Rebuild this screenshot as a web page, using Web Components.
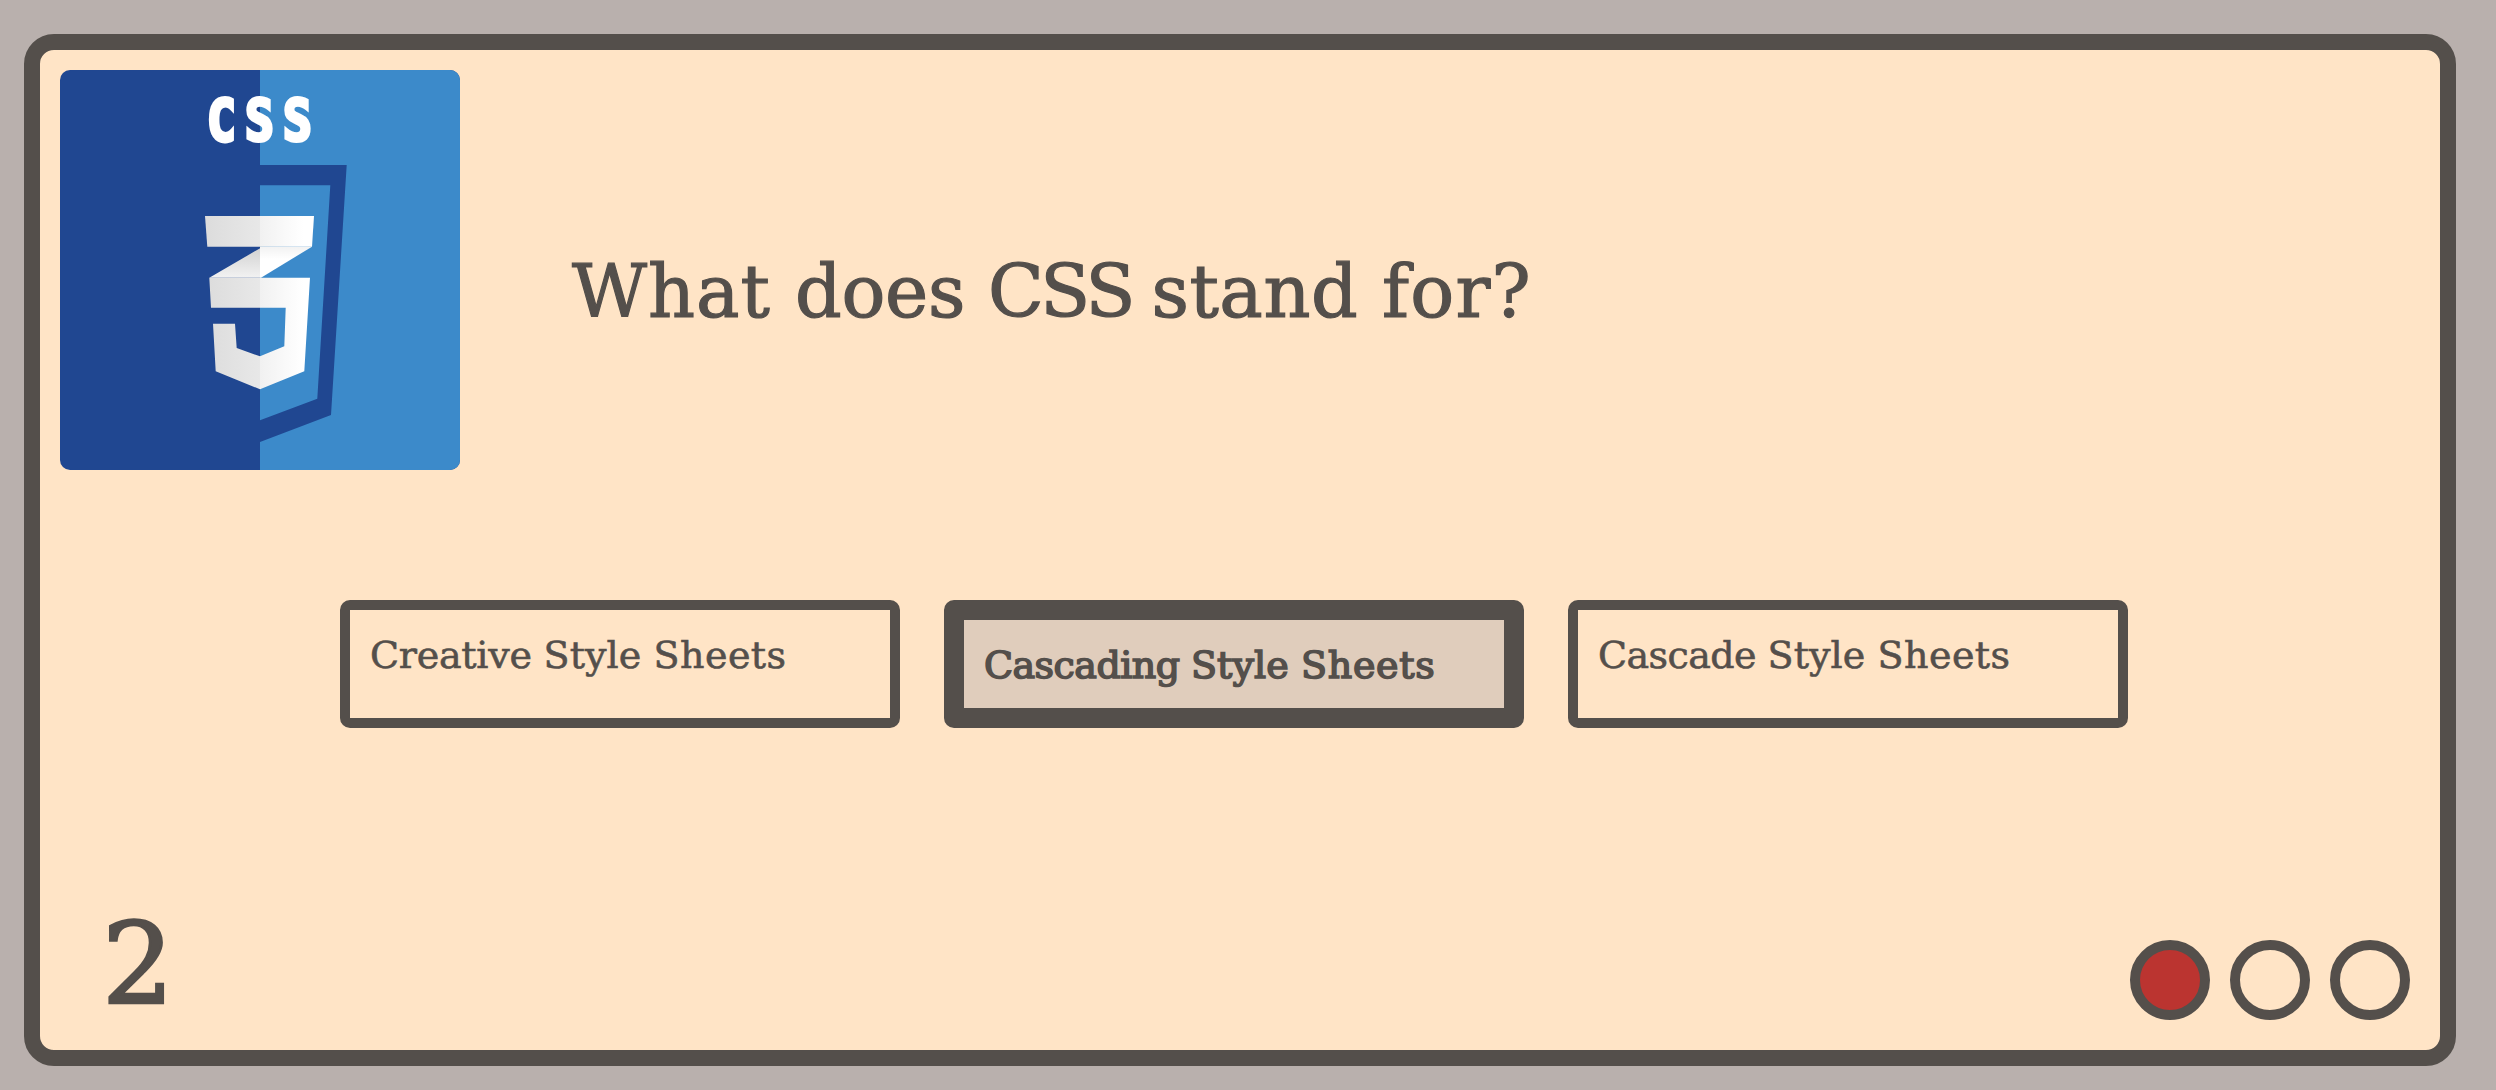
<!DOCTYPE html>
<html lang="en">
<head>
<meta charset="utf-8">
<title>Quiz</title>
<style>
  html { background: #b9b0ad; }
  body { margin: 0; height: 1090px; box-sizing: border-box; padding: 34px 40px 24px 24px; overflow: hidden;
    --ink: #544f4b; --paper: #ffe4c6; color: var(--ink);
    font-family: "DejaVu Serif", "Liberation Serif", serif; }
</style>
</head>
<body>
<quiz-card>
  <css-logo slot="logo"></css-logo>
  <fit-line slot="question" widths="223 193 163.5 230.5 150">What does CSS stand for?</fit-line>
  <quiz-option slot="options"><fit-line widths="173.5 110 133">Creative Style Sheets</fit-line></quiz-option>
  <quiz-option slot="options" selected><fit-line widths="207 110 134.5">Cascading Style Sheets</fit-line></quiz-option>
  <quiz-option slot="options"><fit-line widths="169.5 110 133">Cascade Style Sheets</fit-line></quiz-option>
  <span slot="number">2</span>
  <life-dot slot="lives" lost></life-dot>
  <life-dot slot="lives"></life-dot>
  <life-dot slot="lives"></life-dot>
</quiz-card>
<script>
const attach = (el, html) => { el.attachShadow({ mode: 'open' }).innerHTML = html; };

customElements.define('quiz-card', class extends HTMLElement {
  constructor() {
    super();
    attach(this, `<style>
      :host { display: flex; flex-direction: column; box-sizing: border-box; height: 1032px;
        border: 16px solid var(--ink); border-radius: 30px; background: var(--paper); }
      header { display: flex; height: 400px; padding: 20px 20px 0; gap: 112px; }
      h1 { margin: 0; padding-top: 179px; font-size: 73px; line-height: 86px; font-weight: 400; -webkit-text-stroke: 1.2px var(--ink); }
      main { display: flex; justify-content: center; gap: 44px; height: 128px; margin-top: 130px; padding-right: 12px; }
      footer { flex: 1; display: flex; justify-content: space-between; align-items: flex-end; padding: 0 30px 30px 62px; }
      .number { font-size: 113px; line-height: 112px; -webkit-text-stroke: 2.5px var(--ink); }
      .lives { display: flex; gap: 20px; }
    </style>
    <header><slot name="logo"></slot><h1><slot name="question"></slot></h1></header>
    <main><slot name="options"></slot></main>
    <footer><div class="number"><slot name="number"></slot></div><div class="lives"><slot name="lives"></slot></div></footer>`);
  }
});

customElements.define('quiz-option', class extends HTMLElement {
  constructor() {
    super();
    attach(this, `<style>
      :host { display: block; box-sizing: content-box; width: 500px; padding: 20px 20px 0; border: 10px solid var(--ink);
        border-radius: 10px; font-size: 38px; line-height: 50px; height: 88px; -webkit-text-stroke: .6px var(--ink); }
      :host([selected]) { border-width: 20px; height: 68px; background: #e0cdbc; -webkit-text-stroke: 1.6px var(--ink); }
    </style><slot></slot>`);
  }
});

customElements.define('life-dot', class extends HTMLElement {
  constructor() {
    super();
    attach(this, `<style>
      :host { display: block; width: 60px; height: 60px; border: 10px solid var(--ink); border-radius: 50%; }
      :host([lost]) { background: #bb3430; }
    </style>`);
  }
});

/* One line of text; each word is tracked to span its own entry in "widths". */
customElements.define('fit-line', class extends HTMLElement {
  constructor() {
    super();
    attach(this, `<style>:host { display: inline-block; white-space: pre; }</style><slot></slot>`);
  }
  connectedCallback() {
    const widths = this.getAttribute('widths').split(' ').map(Number);
    const words = this.textContent.split(' ');
    this.replaceChildren(...words.map((word, i) => {
      const span = document.createElement('span');
      span.textContent = i < words.length - 1 ? word + ' ' : word;
      return span;
    }));
    [...this.children].forEach((span, i) => {
      const gap = (widths[i] - span.getBoundingClientRect().width) / span.textContent.length;
      span.style.letterSpacing = gap.toFixed(3) + 'px';
    });
  }
});

customElements.define('css-logo', class extends HTMLElement {
  constructor() {
    super();
    attach(this, `<style>
      :host { display: block; flex: none; width: 400px; height: 400px; border-radius: 10px; overflow: hidden; }
      svg { display: block; }
      text { font: 700 57px "DejaVu Sans Mono", monospace; fill: #fff; stroke: #fff; stroke-width: 4px; stroke-linejoin: miter; }
    </style>
    <svg width="400" height="400" viewBox="0 0 400 400">
      <defs>
        <linearGradient id="face" gradientUnits="userSpaceOnUse" x1="145" y1="0" x2="254" y2="0">
          <stop offset="0" stop-color="#dcdcdc"/><stop offset=".504" stop-color="#e8e8e8"/>
          <stop offset=".504" stop-color="#f1f1f1"/><stop offset=".9" stop-color="#fff"/>
        </linearGradient>
        <linearGradient id="foldL" x1="0" y1="0" x2="0" y2="1"><stop offset="0" stop-color="#d0d0d0"/><stop offset="1" stop-color="#f2f2f2"/></linearGradient>
        <linearGradient id="foldR" x1="0" y1="0" x2="0" y2="1"><stop offset="0" stop-color="#f2f2f2"/><stop offset=".4" stop-color="#fff"/></linearGradient>
      </defs>
      <rect width="400" height="400" fill="#204791"/>
      <rect x="200" width="200" height="400" fill="#3c8aca"/>
      <path fill="#204791" fill-rule="evenodd" d="M200 95H286.7L271 345L200 372V350.3L257.3 328.7L270.3 115.3H200Z"/>
      <text transform="translate(147 71.3) scale(.84 1)" x="0 45.2 90.4">CSS</text>
      <path fill="url(#face)" d="M145 146H254L252 176.7H147.3Z"/>
      <path fill="url(#foldL)" d="M202.7 176.7L149.3 207.7H200V176.7Z"/>
      <path fill="url(#foldR)" d="M200 176.7H252L201 207.7H200Z"/>
      <path fill="url(#face)" d="M149.3 207.7H250L244.3 301.3L200 319.3L155.7 301.3L153 253.7H175L176.7 278L200 286.3L224.3 276.3L225.7 237.7H151Z"/>
    </svg>`);
  }
});
</script>
</body>
</html>
